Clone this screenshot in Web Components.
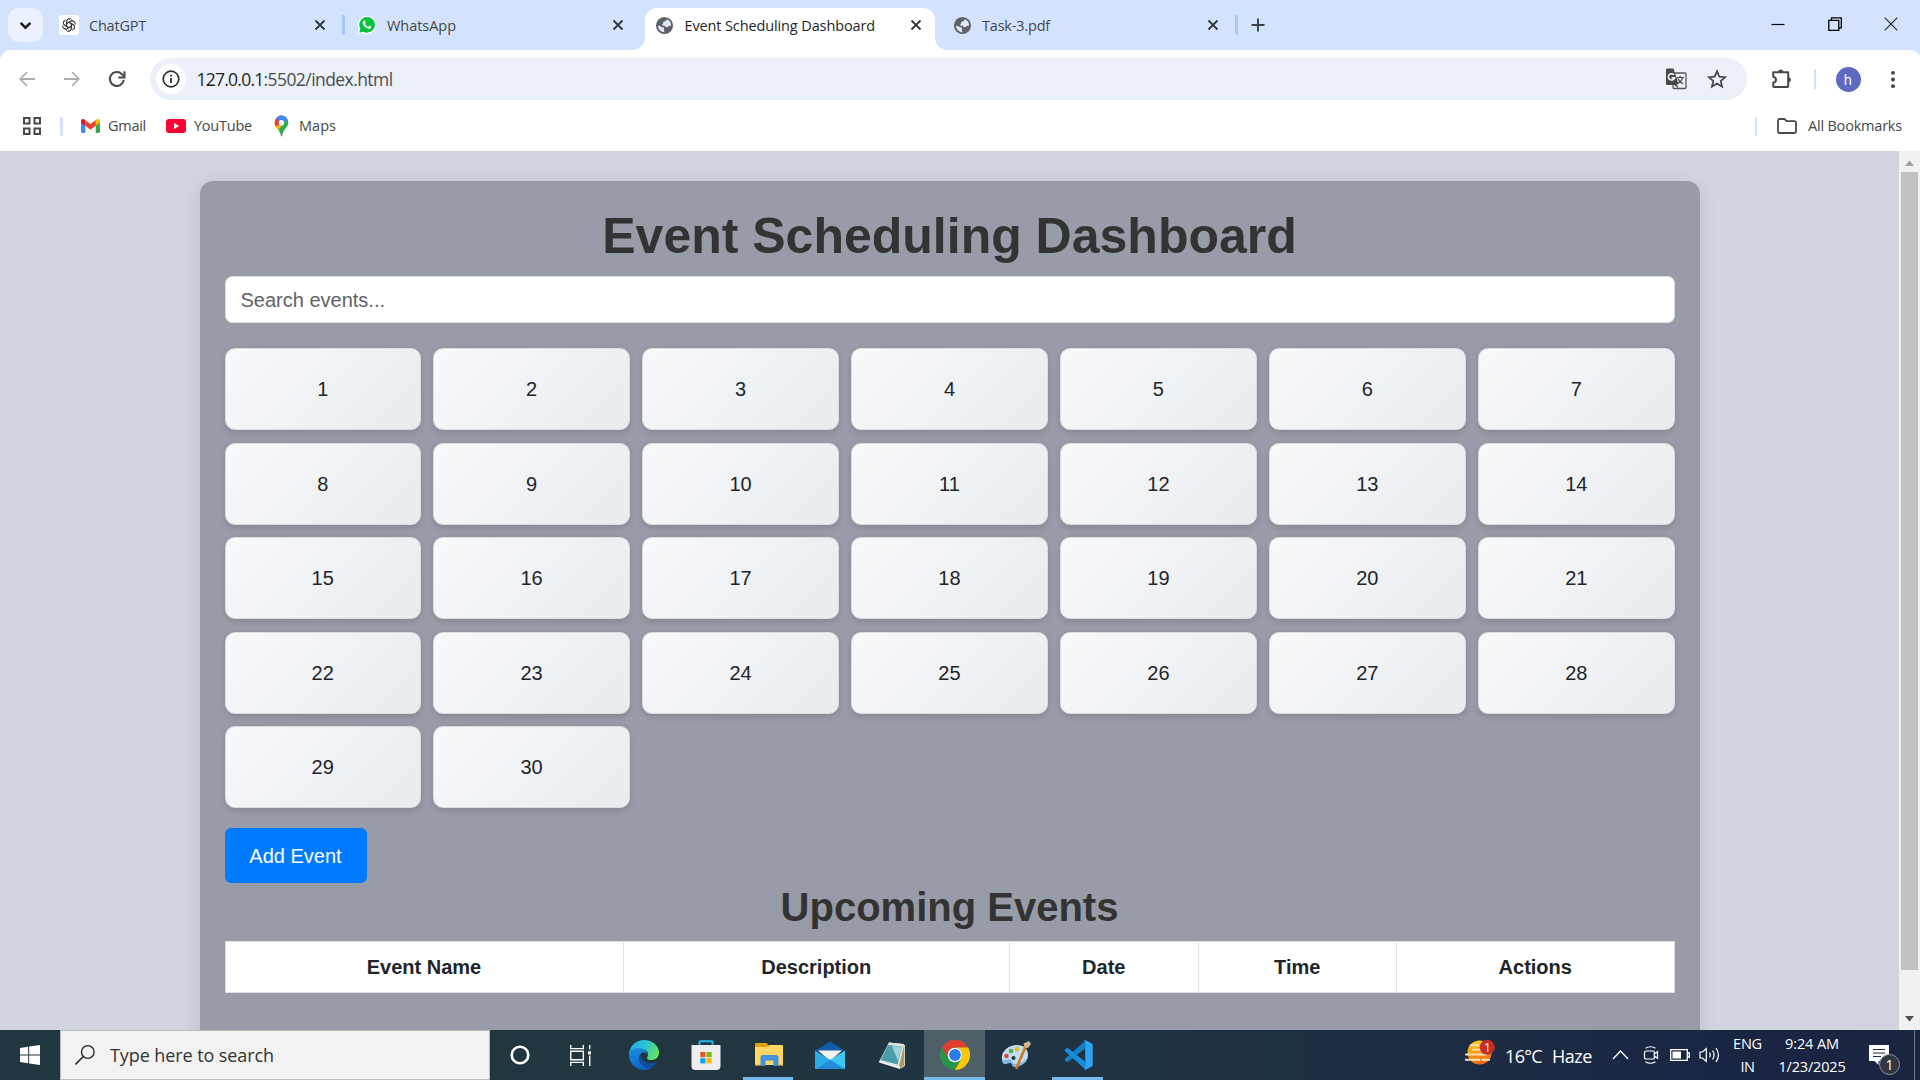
<!DOCTYPE html>
<html lang="en">
<head>
<meta charset="utf-8">
<title>Event Scheduling Dashboard</title>
<style>
html,body{margin:0;width:1920px;height:1080px;overflow:hidden;background:#fff}
</style>
</head>
<body>
<desktop-screen></desktop-screen>
<script>
const define=(name,html,init)=>customElements.define(name,class extends HTMLElement{
  connectedCallback(){
    if(this.shadowRoot)return;
    const t=document.createElement('template');
    t.innerHTML=typeof html==='function'?html(this):html;
    this.attachShadow({mode:'open'}).appendChild(t.content.cloneNode(true));
    if(init)init(this);
  }
});

/* Text run that spreads its letters over a given width */
define('fit-text','<style>:host{display:block;flex:none;white-space:pre;line-height:1.2;width:max-content}</style><slot></slot>',el=>{
  const w=+el.getAttribute('w');
  if(!w)return;
  const n=el.textContent.length;
  el.style.letterSpacing=((w-el.getBoundingClientRect().width)/n).toFixed(3)+'px';
  el.style.width=w+'px';
});

const globe='<circle cx="10" cy="10" r="9" fill="#5f6368"/><path fill="#dfe8f8" d="M3 10.300c1.700-.1 2.700.5 3.800 1.200c.9.600 1.700.7 2.700.7v2.300c0 .8-.4 1.200.3 1.500l.1 1a7 7 0 0 1-6.900-6.700zM12.300 3.400c-.2 1.200-.7 1.900-1.700 2.200c-1.200.3-2 .6-2.100 1.500c0 .9.300 1.500-.7 1.700c-.8.200-.9.900-.1 1.200c1.200.3 2.200-.1 2.800.8c.6.700 1.500 1 2.400.9c1.100-.1 1-.9 1.700-1.200c.9-.3 1.500-.3 2.300-.1a7 7 0 0 0-4.600-7z"/>';
const petals=[0,60,120,180,240,300].map(a=>`<path transform="rotate(${a} 12 12)" d="M8.700 13.900V6.200a4.200 4.200 0 0 1 7.600-2.400M9 9.100l5.400-3.100a4.200 4.200 0 0 1 6.100 2.700"/>`).join('');
const ICONS={
 down:['0 0 12 12','<path d="M1.500 3.500L6 8l4.500-4.500" fill="none" stroke="#1f1f1f" stroke-width="2.300"/>'],
 gpt:['0 0 24 24',`<rect width="24" height="24" rx="4" fill="#fff"/><g transform="translate(2.600 2.600) scale(.78)" fill="none" stroke="#333" stroke-width="1.350">${petals}</g>`],
 wa:['0 0 24 24','<path d="M1 23l1.600-5.900A11 11 0 1 1 7 21.500z" fill="#fff"/><path d="M2.600 21.400l1.400-4.900A9.400 9.400 0 1 1 7.600 20z" fill="#06c23f"/><path d="M8.500 6.500c.6-.3 1.100 0 1.300.6l.7 1.700c.1.500-.8 1.300-.8 1.600c.8 1.800 2.100 2.900 3.800 3.600c.4 0 1.100-1.300 1.500-1.200l1.900.9c.5.300.4.800.2 1.300c-.6 1.400-2 1.900-3.300 1.600c-3.400-.9-6.100-3.400-7-6.600c-.2-1.500.5-2.900 1.700-3.500z" fill="#fff"/>'],
 globe:['0 0 20 20',globe],
 x:['0 0 12 12','<path d="M1.500 1.500l9 9M10.500 1.500l-9 9" stroke="#333639" stroke-width="1.800"/>'],
 plus:['0 0 14 14','<path d="M7 .5v13M.5 7h13" stroke="#3c4043" stroke-width="1.900"/>'],
 min:['0 0 14 14','<path d="M.5 7.500h13" stroke="#000" stroke-width="1.200"/>'],
 max:['0 0 14 14','<path d="M.8 3.300h10v10h-10zM3.500 3V.8h9.800v10H11" fill="none" stroke="#000" stroke-width="1.300"/>'],
 wx:['0 0 14 14','<path d="M.7.7l12.600 12.600M13.300.7L.7 13.300" stroke="#222" stroke-width="1.100"/>'],
 back:['0 0 16 16','<path d="M8 1L1.300 8L8 15M1.500 8H16" fill="none" stroke="#abaeb1" stroke-width="1.800"/>'],
 fwd:['0 0 16 16','<path d="M8 1l6.700 7L8 15M14.500 8H0" fill="none" stroke="#abaeb1" stroke-width="1.800"/>'],
 reload:['0 0 18 18','<path d="M15.800 9.800A7 7 0 1 1 13.900 4.100L15.700 6" fill="none" stroke="#45484b" stroke-width="2"/><path d="M16.500 1.200v6.300h-6.300" fill="none" stroke="#45484b" stroke-width="2"/>'],
 info:['0 0 18 18','<circle cx="9" cy="9" r="7.800" fill="none" stroke="#2b2e31" stroke-width="1.700"/><path d="M9 8v5" stroke="#2b2e31" stroke-width="1.800"/><path d="M9 4.700v1.900" stroke="#2b2e31" stroke-width="1.900"/>'],
 translate:['0 0 22 22','<rect x="8" y="5" width="13" height="15.500" rx="1.200" fill="#eef1f9" stroke="#55585b" stroke-width="1.300"/><path d="M1 2q0-1.500 1.500-1.500H8.500L13.500 16H12l1.500 4.500L9.500 17H2.500Q1 17 1 15.500z" fill="#46494c"/><path d="M9 6.800a3.200 3.200 0 1 0 .6 3H6.500" fill="none" stroke="#fff" stroke-width="1.500"/><path d="M11.500 9.500h7.500M15.200 8v1.500M17.500 9.800q-1 4-5.500 6M12.800 10.500q1.500 3.500 5.500 5.500" fill="none" stroke="#46494c" stroke-width="1.200"/>'],
 star:['0 0 20 20','<path d="M10 2.200l2.300 5.400 5.900.5-4.500 3.900 1.400 5.700L10 14.600 4.900 17.700l1.400-5.700L1.800 8.100l5.900-.5z" fill="none" stroke="#45484b" stroke-width="1.700"/>'],
 puzzle:['0 0 22 22','<path d="M2.200 4.200h15v13.900q0 1-1 1h-13q-1 0-1-1v-3.400q2.800-.6 2.800-3t-2.800-3z" fill="none" stroke="#45484b" stroke-width="2" stroke-linejoin="round"/><path d="M7.200 4a2.600 2.600 0 0 1 5.200 0zM17.500 9.200a2.500 2.500 0 0 1 0 5z" fill="#45484b"/>'],
 dots:['0 0 6 20','<g fill="#45484b"><circle cx="3" cy="3" r="2"/><circle cx="3" cy="10" r="2"/><circle cx="3" cy="17" r="2"/></g>'],
 apps:['0 0 18 18','<path d="M1 1h5.500v5.500H1zM11.500 1H17v5.500h-5.500zM1 11.500h5.500V17H1zM11.500 11.500H17V17h-5.500z" fill="none" stroke="#484b4e" stroke-width="2"/>'],
 gmail:['0 0 20 15','<path d="M0 2v11.500Q0 15 1.500 15H4.500V5z" fill="#4285f4"/><path d="M20 2v11.500q0 1.500-1.500 1.500H15.500V5z" fill="#34a853"/><path d="M15.500 1.300v6L20 4V2.200C20 .2 17.700-.6 16.300.5z" fill="#fbbc04"/><path d="M4.500 7.300V1.200L10 5.300l5.500-4.100v6.100L10 11.400z" fill="#ea4335"/><path d="M0 2.200V4l4.500 3.300v-6L3.700.5C2.300-.6 0 .2 0 2.200z" fill="#c5221f"/>'],
 yt:['0 0 20 14','<rect width="20" height="14" rx="3" fill="#f03"/><path d="M8 4v6l5.200-3z" fill="#fff"/>'],
 maps:['0 0 16 22','<defs><clipPath id="p"><path d="M8 .5A7.300 7.300 0 0 0 .7 7.800c0 4.600 5.700 6.700 6.600 12.900.2 1 1.200 1 1.400 0C9.600 14.500 15.300 12.400 15.300 7.800A7.300 7.300 0 0 0 8 .5z"/></clipPath></defs><g clip-path="url(#p)"><path fill="#34a853" d="M0 0h16v22H0z"/><path d="M-2 13L8 2l5 3L3 17z" fill="#fbbc04"/><path d="M-1 0h9L5 10 0 13z" fill="#ea4335"/><path d="M3-1h14v5L8 9 2.500 3.500z" fill="#4285f4"/></g><circle cx="8" cy="7.800" r="2.800" fill="#fff"/>'],
 folder:['0 0 20 16','<path d="M1 2.500Q1 1 2.500 1H7.500l2 2.200h8q1.500 0 1.500 1.500v8.800q0 1.500-1.500 1.500h-15Q1 15 1 13.500z" fill="none" stroke="#484b4e" stroke-width="1.800"/>'],
 up:['0 0 10 6','<path d="M0 6L5 .5 10 6z" fill="#a0a0a0"/>'],
 dn:['0 0 10 6','<path d="M0 0l5 5.500L10 0z" fill="#505050"/>'],
 win:['0 0 20 20','<path d="M0 2.900l8.200-1.200v7.800H0zM9.200 1.500L20 0v9.500H9.200zM0 10.500h8.200v7.800L0 17.100zM9.200 10.500H20V20L9.200 18.500z" fill="#fff"/>'],
 find:['0 0 20 20','<circle cx="12.800" cy="7" r="6.300" fill="none" stroke="#222" stroke-width="1.300"/><path d="M8.300 11.500L.5 19.400" stroke="#222" stroke-width="1.500"/>'],
 cortana:['0 0 20 20','<circle cx="10" cy="10" r="8.300" fill="none" stroke="#fff" stroke-width="2.600"/>'],
 taskview:['0 0 20 20','<path d="M.7 0v3.500h12V0M.7 20v-3.500h12V20M.7 6h12v8H.7zM18.800 0v4M18.800 10v10" fill="none" stroke="#fff" stroke-width="1.300"/><path d="M17.200 6h3v3h-3z" fill="#fff"/>'],
 edge:['0 0 30 30','<defs><linearGradient id="a" x1="0" y1=".3" x2="1" y2=".6"><stop stop-color="#25abe8"/><stop offset=".5" stop-color="#2cc3d4"/><stop offset="1" stop-color="#6be457"/></linearGradient><linearGradient id="b" x1=".2" y1="0" x2=".5" y2="1"><stop stop-color="#1b8ee0"/><stop offset="1" stop-color="#0b62c4"/></linearGradient></defs><path d="M0 14C1 5 7.500 0 15 0c8.500 0 15 6 15 12.500 0 5-3.500 7.500-7.500 7.500-3 0-5-1-4.300-2.600 2.600-4.400-.9-8.400-6.200-8.400C6 9 1.500 12 0 14z" fill="url(#a)"/><path d="M0 15c0-5 4.500-7 9-7 5.500 0 9.500 3.500 9.500 7-1-2.500-4.500-4-7-1-2.500 4 0 10 6 12.500 3 1 5 .5 6 .5-2 2-5 3-8.500 3C6.500 30 0 23 0 15z" fill="url(#b)"/><path d="M11.500 14C7 20 12.500 28 20 28c4-.5 6.800-3 8-5.700.2-.6-.3-.8-.8-.5C22 24.500 15 23 12.500 18c-.8-1.700-1-3-1-4z" fill="#114c9c"/>'],
 store:['0 0 30 30','<path d="M8.500 6V2q0-.8.800-.8h11.400q.8 0 .8.800v4" fill="none" stroke="#28b5f3" stroke-width="2"/><path d="M.5 5h29v21q0 4-4 4h-21q-4 0-4-4z" fill="#eee"/><path d="M9.300 12h5.200v5.200H9.300z" fill="#f25022"/><path d="M15.500 12h5.200v5.200h-5.200z" fill="#7fba00"/><path d="M9.300 18.200h5.200v5.200H9.300z" fill="#00a4ef"/><path d="M15.500 18.200h5.200v5.200h-5.200z" fill="#ffb900"/>'],
 explorer:['0 0 30 30','<path d="M1 4q0-1 1-1h10q1.500 0 2 2l1 2H1z" fill="#dfa00b"/><path d="M1 7h12l2-2h13q1 0 1 1V25H1z" fill="#ffd563"/><path d="M6.500 26V17.500q0-2.500 2.500-2.500h13q2.500 0 2.500 2.500V26h-5v-5.500h-8V26z" fill="#3f92db"/><path d="M1 25.200h5.500M24.500 25.200H29" stroke="#e3a427"/>'],
 mail:['0 0 30 30','<path d="M0 11L15 1.500 30 11z" fill="#0f5cab"/><path d="M3 10.500h24L15 21z" fill="#f3f3f3"/><path d="M0 10.500L30 29H1q-1 0-1-1z" fill="#2aace7"/><path d="M30 10.500V28q0 1-1 1L15 20z" fill="#40c8f4"/><path d="M15 19.800L30 29H1z" fill="#218ddc"/>'],
 notepad:['0 0 30 30','<path d="M11 3l16 2v21l-4 2.500L1 22z" fill="#d2ccb9"/><path d="M11 2.500l15 1.800-4 22L1.500 21z" fill="#dbeaec"/><path d="M10 5l14 1.500-4.300 18L2.500 20z" fill="#4c9dab"/><path d="M14 6l10 .7-4 14z" fill="#a1d4da"/><path d="M11 2.500l15 1.500-.3 2L10 4.500z" fill="#e1e3e0"/><path d="M26 5v20l-4 3.500-1-2z" fill="#b19662"/><path d="M1.500 21L22 26.500V29L1 22.500z" fill="#eef2f3"/>'],
 chrome:['0 0 30 30','<circle cx="15" cy="15" r="15" fill="#27964a"/><path d="M2 7.500A15 15 0 0 1 28 7.500H15A7.500 7.500 0 0 0 8.500 18.700z" fill="#e33b2e"/><path d="M28 7.500A15 15 0 0 1 15 30L21.500 18.700A7.500 7.500 0 0 0 15 7.500z" fill="#fdc60a"/><circle cx="15" cy="15" r="7.300" fill="#fff"/><circle cx="15" cy="15" r="5.900" fill="#2b7ae9"/>'],
 paint:['0 0 30 30','<path d="M1 19C0 11 8 5 16 5c7 0 11 4 11 10 0 8-8 11-13 11-4 0-2-4-5-4-2.500 0-4 2-6 1S1 20 1 19z" fill="#c2def1"/><path d="M1 19c2 2.500 4 0 7 .5 4 .5 2 3.500 6 4.500 5 0 12-3 13-9 0 8-8 12-13 12-4 0-2-4-5-4-3 0-4 2-6 1-1.500-.8-2-3-2-5z" fill="#82b7dd"/><circle cx="5.500" cy="16" r="2.300" fill="#d8483e"/><circle cx="10" cy="11" r="2.300" fill="#55ad46"/><circle cx="16" cy="9" r="2.300" fill="#f1b51e"/><circle cx="12.500" cy="18" r="2" fill="#223641"/><path d="M24.500 7L15 29" stroke="#d57825" stroke-width="2.600"/><path d="M22.500 3.500L28 1l2 3-3 4-3.500-.5z" fill="#d9b488"/>'],
 vscode:['0 0 30 30','<path d="M22 1v7.500L4.500 22.300 2.300 21q-1.500-1.200 0-2.500z" fill="#137fc9"/><path d="M22 21.500L4.500 7.700 2.300 9q-1.500 1.200 0 2.500L22 29z" fill="#158fdd"/><path d="M21 .5q1-.8 2 0l5.500 2.700q1.200.6 1.200 2v19.600q0 1.400-1.200 2L23 29.500q-1 .5-2 0 1.200-.2 1.200-2V2.500q0-1.700-1.200-2z" fill="#2ba6f2"/>'],
 weather:['0 0 32 28','<defs><linearGradient id="s" x1="0" y1="0" x2=".2" y2="1"><stop stop-color="#fdd41b"/><stop offset="1" stop-color="#ed6c13"/></linearGradient></defs><circle cx="15" cy="14" r="12.500" fill="url(#s)"/><path d="M6 6.500h8M1 16h21M8 11h9M0 21.500h15M18 21.500h7" stroke="#f7dfb8" stroke-width="2" stroke-linecap="round"/><circle cx="23" cy="8.500" r="7.800" fill="#c52c22"/>'],
 chev:['0 0 18 10','<path d="M1 9l8-8 8 8" fill="none" stroke="#fff" stroke-width="1.400"/>'],
 meet:['0 0 16 20','<path d="M3.300 6h7q1 0 1 1v6q0 1-1 1h-7q-1.800 0-1.800-1.500v-5Q1.500 6 3.300 6zM11.300 9l3.200-2.300v6.600L11.300 11M2.500 3.200Q7.500.3 12.500 3.200M2.500 16.800q5 2.900 10 0" fill="none" stroke="#fff" stroke-width="1.200"/>'],
 battery:['0 0 20 12','<path d="M.7.700h16.600v10.600H.7zM17.300 4h2v4h-2" fill="none" stroke="#fff" stroke-width="1.300"/><path d="M2.500 2.500h8.500v7H2.500z" fill="#fff"/>'],
 sound:['0 0 22 18','<path d="M1 6h2.500L7.300 2.500v13L3.500 12H1z" fill="none" stroke="#fff" stroke-width="1.200"/><path d="M10.500 6.700q1.600 2.300 0 4.600M13.500 4.500q3.200 4.500 0 9M17 2q4.800 7 0 14" fill="none" stroke="#fff" stroke-width="1.200"/>'],
 note:['0 0 20 20','<path d="M0 0h20v16H9.500v4L5.500 16H0z" fill="#fff"/><path d="M4 4.500h12M4 8h12M4 11.500h8" stroke="#1c2a40" stroke-width="1.200"/>']
};
define('ui-icon',el=>{
  const [vb,p]=ICONS[el.getAttribute('name')];
  const w=el.getAttribute('w'),h=el.getAttribute('h')||w;
  return `<style>:host{display:block;flex:none;width:${w}px;height:${h}px}svg{display:block}</style><svg width="${w}" height="${h}" viewBox="${vb}" preserveAspectRatio="none">${p}</svg>`;
});

define('browser-tab',el=>`<style>
:host{display:flex;align-items:center;box-sizing:border-box;flex:none;width:290px;height:42px;padding:0 13px 8px 10px;color:#45484b;font-size:14.500px;position:relative}
:host([active]){background:#fff;color:#1f1f1f;border-radius:12px 12px 0 0}
:host([active])::before,:host([active])::after{content:"";position:absolute;bottom:0;width:12px;height:12px}
:host([active])::before{left:-12px;background:radial-gradient(circle at 0 0,transparent 11.500px,#fff 12px)}
:host([active])::after{right:-12px;background:radial-gradient(circle at 100% 0,transparent 11.500px,#fff 12px)}
.i{display:grid;place-items:center;width:20px;margin-right:10px}
.x{margin-left:auto}
slot{display:block;padding-top:1px}
</style><span class="i"><ui-icon name="${el.getAttribute('icon')}" w="${el.getAttribute('isize')||19}"></ui-icon></span><slot></slot><ui-icon class="x" name="x" w="12"></ui-icon>`);

define('tab-strip',`<style>
:host{display:flex;height:50px;box-sizing:border-box;padding:8px 0 0 8px;background:#d3e3fd}
.dd{display:grid;place-items:center;width:35px;height:34px;border-radius:11px;background:#ebf1fe;margin-right:6px}
.s{width:2.500px;height:20px;background:#a8c7fa;border-radius:1px;margin:7px 2.500px 0}
.plus{margin:10px 0 0 11px}
.win{display:flex;margin:9px 22px 0 auto;gap:42.500px}
</style>
<span class="dd"><ui-icon name="down" w="13"></ui-icon></span>
<browser-tab icon="gpt" isize="20"><fit-text w="57">ChatGPT</fit-text></browser-tab><span class="s" style="margin-left:3px"></span>
<browser-tab icon="wa" isize="20"><fit-text w="69">WhatsApp</fit-text></browser-tab><span class="s" style="visibility:hidden"></span>
<browser-tab icon="globe" active><fit-text w="190.500">Event Scheduling Dashboard</fit-text></browser-tab><span class="s" style="visibility:hidden"></span>
<browser-tab icon="globe"><fit-text w="68">Task-3.pdf</fit-text></browser-tab><span class="s" style="margin-left:3px"></span>
<ui-icon class="plus" name="plus" w="14"></ui-icon>
<span class="win"><ui-icon name="min" w="14"></ui-icon><ui-icon name="max" w="14"></ui-icon><ui-icon name="wx" w="14"></ui-icon></span>`);

define('address-bar',`<style>
:host{display:flex;height:58px;background:linear-gradient(#d3e3fd 14px,#fff 14px)}
.bg{flex:1;display:flex;align-items:center;background:#fff;border-radius:11px 11px 0 0;padding:0 25.500px 0 19px}
.omni{display:flex;align-items:center;box-sizing:border-box;width:1597px;height:42px;border-radius:21px;background:#ebf0f9;margin-left:23.500px;padding:0 20px 0 6px;font-size:17.500px;color:#4a4d50}
.inf{display:grid;place-items:center;width:30px;height:30px;border-radius:50%;background:#fff;margin-right:11px}
b{font-weight:400;color:#1f1f1f}
.sep{width:2px;height:20px;background:#d3e3fd;margin:0 20px 0 21px}
.av{display:grid;place-items:center;width:25px;height:25px;border-radius:50%;background:#5c6bc0;color:#fff;font:14px Inter,sans-serif;margin-right:29px}
</style><div class="bg">
<ui-icon name="back" w="16"></ui-icon><ui-icon name="fwd" w="16" style="margin-left:29px"></ui-icon><ui-icon name="reload" w="18" style="margin-left:28px"></ui-icon>
<div class="omni"><span class="inf"><ui-icon name="info" w="18"></ui-icon></span><b><fit-text w="67">127.0.0.1</fit-text></b><fit-text w="129">:5502/index.html</fit-text>
<ui-icon name="translate" w="22" style="margin-left:auto"></ui-icon><ui-icon name="star" w="20" style="margin-left:20px"></ui-icon></div>
<ui-icon name="puzzle" w="22" style="margin-left:24px"></ui-icon><span class="sep"></span><span class="av">h</span><ui-icon name="dots" w="6" h="19"></ui-icon></div>`);

define('bookmark-bar',`<style>
:host{display:flex;align-items:center;height:43px;box-sizing:border-box;background:#fff;padding:0 18px 7px 23px;font-size:14.500px;color:#45484b}
.s{width:2.500px;height:19px;background:#d3e3fd;border-radius:1px}
</style>
<ui-icon name="apps" w="18"></ui-icon><span class="s" style="margin:0 18.500px 0 19px"></span>
<ui-icon name="gmail" w="19" h="14"></ui-icon><fit-text w="38" style="margin-left:8px">Gmail</fit-text>
<ui-icon name="yt" w="20" h="14" style="margin-left:20px"></ui-icon><fit-text w="58" style="margin-left:8px">YouTube</fit-text>
<ui-icon name="maps" w="15" h="22" style="margin-left:22px"></ui-icon><fit-text w="37" style="margin-left:10px">Maps</fit-text>
<span class="s" style="margin-left:auto"></span><ui-icon name="folder" w="20" h="16" style="margin:0 11px 0 20px"></ui-icon><fit-text w="94">All Bookmarks</fit-text>`);

define('day-cell',`<style>:host{display:flex;align-items:center;justify-content:center;box-sizing:border-box;height:82px;padding-top:1px;border:1px solid #dcdcde;border-radius:10px;background:linear-gradient(135deg,#f8f9fb,#e8ecef);box-shadow:0 2.500px 6px rgba(0,0,0,.12)}</style><slot></slot>`);

define('calendar-grid',()=>`<style>:host{display:grid;grid-template-columns:repeat(7,1fr);gap:12.500px}</style>${Array.from({length:30},(_,i)=>`<day-cell>${i+1}</day-cell>`).join('')}`);

define('events-table',`<style>
:host{display:grid;grid-template-columns:398px 386.500px 188.500px 198.500px 278.500px;box-sizing:border-box;height:52px;background:#fff;font-weight:700}
div{display:flex;align-items:center;justify-content:center;border:1px solid #dee2e6;border-right:0}
div:last-child{border-right:1px solid #dee2e6}
</style><div>Event Name</div><div>Description</div><div>Date</div><div>Time</div><div>Actions</div>`);

define('event-dashboard',`<style>
:host{display:block;width:1500px;height:940px;box-sizing:border-box;padding:25px;border-radius:13px;background:#989ca8;box-shadow:0 5px 20px rgba(0,0,0,.11);font:20px "Liberation Sans",Arial,sans-serif;color:#212529}
h1,h2{margin:0 0 10px;text-align:center;color:#333;line-height:1.2}
h1{font-size:50px}h2{font-size:40px}
.q{display:flex;align-items:center;box-sizing:border-box;height:47px;border:1px solid #dee2e6;border-radius:7.500px;background:#fff;padding:2px 15px 0;color:#5d6268;margin-bottom:25px}
.b{display:flex;align-items:center;justify-content:center;box-sizing:border-box;width:142px;height:55px;padding-top:2px;border-radius:6px;background:#007bff;color:#fff;margin-top:20px}
</style>
<h1>Event Scheduling Dashboard</h1><div class="q">Search events...</div><calendar-grid></calendar-grid><div class="b">Add Event</div><h2>Upcoming Events</h2><events-table></events-table>`);

define('scroll-bar',`<style>
:host{display:flex;flex-direction:column;align-items:center;justify-content:space-between;width:21px;background:#f1f1f1;box-sizing:border-box;padding:9px 0 8px}
.t{width:17px;height:798px;background:#c1c1c1;margin:6px 0 auto}
</style><ui-icon name="up" w="9" h="6"></ui-icon><span class="t"></span><ui-icon name="dn" w="9" h="6"></ui-icon>`);

define('web-view',`<style>
:host{display:flex;height:879px;overflow:hidden;background:#d2d4e0}
.p{flex:1;display:flex;justify-content:center;padding-top:30px}
</style><div class="p"><event-dashboard></event-dashboard></div><scroll-bar></scroll-bar>`);

define('task-item',el=>`<style>
:host{display:flex;align-items:center;justify-content:center;flex:none;box-sizing:border-box;width:62px;height:50px;position:relative}
:host([open])::after{content:"";position:absolute;left:5px;right:6px;bottom:0;height:3px;background:#76b9ed}
:host([current]){background:#4f5f68}
:host([current])::after{left:0;right:0}
</style><ui-icon name="${el.getAttribute('icon')}" w="${el.getAttribute('w')||30}"></ui-icon>`);

define('task-bar',`<style>
:host{display:flex;align-items:center;height:50px;background:linear-gradient(90deg,#21373f 0,#21363f 35%,#203343 55%,#1d2d42 75%,#1a2544 90%,#1c2540 100%);color:#fff;font-size:18px}
.f{display:flex;align-items:center;box-sizing:border-box;width:430px;height:50px;border:1px solid #bdbdbd;background:#f2f2f2;color:#333;padding-left:14px}
.tray{display:flex;align-items:center;margin-left:auto;height:50px}
.col{display:flex;flex-direction:column;align-items:center;gap:5px;font-size:14.500px}
.w,.n{position:relative}
.w span{position:absolute;left:19.500px;top:0;font-size:12px;line-height:17px}
.n span{position:absolute;left:10px;top:9px;width:19px;height:19px;border:1px solid #8b929b;border-radius:50%;background:#303740;display:grid;place-items:center;font-size:14px;line-height:1}
.line{width:1px;height:50px;background:#727b88;margin:0 5px 0 25px}
</style>
<task-item icon="win" w="20" style="width:60px"></task-item>
<div class="f"><ui-icon name="find" w="20"></ui-icon><fit-text w="164" style="margin:2px 0 0 15px">Type here to search</fit-text></div>
<task-item icon="cortana" w="20" style="width:60px"></task-item><task-item icon="taskview" w="21" style="width:60px"></task-item>
<task-item icon="edge" style="width:68px"></task-item><task-item icon="store" style="width:55px;margin-right:5px"></task-item>
<task-item icon="explorer" open style="width:61px"></task-item><task-item icon="mail"></task-item><task-item icon="notepad" style="width:63px"></task-item>
<task-item icon="chrome" open current style="width:61px"></task-item><task-item icon="paint"></task-item><task-item icon="vscode" open></task-item>
<div class="tray">
<span class="w" style="margin-top:-5px"><ui-icon name="weather" w="31" h="27"></ui-icon><span>1</span></span>
<fit-text w="37" style="margin:3px 0 0 9.500px">16°C</fit-text><fit-text w="40" style="margin:3px 0 0 10px">Haze</fit-text>
<ui-icon name="chev" w="17" h="10" style="margin-left:20px"></ui-icon>
<ui-icon name="meet" w="16" h="20" style="margin-left:14px"></ui-icon>
<ui-icon name="battery" w="20" h="12" style="margin-left:11px"></ui-icon>
<ui-icon name="sound" w="22" h="18" style="margin-left:9px"></ui-icon>
<div class="col" style="margin-left:12px"><fit-text w="29">ENG</fit-text><fit-text w="14">IN</fit-text></div>
<div class="col" style="margin-left:16.500px"><fit-text w="54">9:24 AM</fit-text><fit-text w="67">1/23/2025</fit-text></div>
<div class="n" style="margin-left:23.500px"><ui-icon name="note" w="20"></ui-icon><span>1</span></div><span class="line"></span></div>`);

define('desktop-screen',`<style>:host{display:flex;flex-direction:column;width:1920px;height:1080px;overflow:hidden;font-family:"Open Sans","Noto Sans",sans-serif}</style>
<tab-strip></tab-strip><address-bar></address-bar><bookmark-bar></bookmark-bar><web-view></web-view><task-bar></task-bar>`);
</script>
</body>
</html>
